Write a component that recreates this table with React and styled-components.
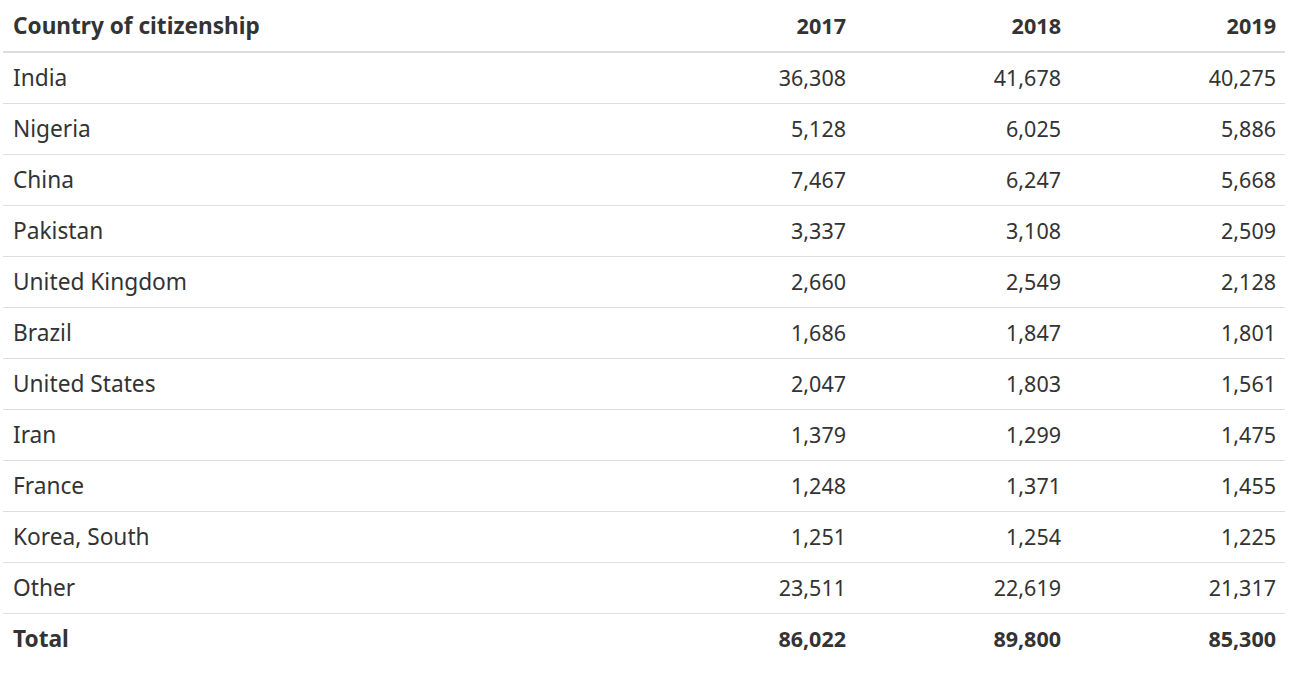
import React from "react";
import styled, { createGlobalStyle } from "styled-components";

const Global = createGlobalStyle`
  html, body { margin: 0; padding: 0; background: #fff; }
  body { font-family: "Noto Sans", "Open Sans", sans-serif; color: #333; }
`;

const Wrap = styled.div`
  padding: 0 31px 0 3px;
`;

const Table = styled.table`
  width: 1282px;
  border-collapse: collapse;
  line-height: 1.2;
  table-layout: fixed;
`;

const Th = styled.th`
  font-weight: 700;
  font-size: ${(p) => (p.$num ? "21.6px" : "22.6px")};
  text-align: ${(p) => (p.$num ? "right" : "left")};
  padding: 0 9px 0 10px;
  height: 51px;
  border-bottom: 2px solid #ddd;
  color: #333;
`;

const Td = styled.td`
  font-weight: ${(p) => (p.$bold ? 700 : 400)};
  font-size: ${(p) => (p.$num ? "21.5px" : "22.7px")};
  text-align: ${(p) => (p.$num ? "right" : "left")};
  padding: 0 9px 0 10px;
  height: 50px;
  border-top: ${(p) => (p.$first ? "none" : "1px solid #ddd")};
  color: #333;
`;

const rows = [
  ["India", "36,308", "41,678", "40,275"],
  ["Nigeria", "5,128", "6,025", "5,886"],
  ["China", "7,467", "6,247", "5,668"],
  ["Pakistan", "3,337", "3,108", "2,509"],
  ["United Kingdom", "2,660", "2,549", "2,128"],
  ["Brazil", "1,686", "1,847", "1,801"],
  ["United States", "2,047", "1,803", "1,561"],
  ["Iran", "1,379", "1,299", "1,475"],
  ["France", "1,248", "1,371", "1,455"],
  ["Korea, South", "1,251", "1,254", "1,225"],
  ["Other", "23,511", "22,619", "21,317"],
];

export default function App() {
  return (
    <Wrap>
      <Global />
      <Table>
        <colgroup>
          <col style={{ width: 637 }} />
          <col style={{ width: 215 }} />
          <col style={{ width: 215 }} />
          <col style={{ width: 215 }} />
        </colgroup>
        <thead>
          <tr>
            <Th>Country of citizenship</Th>
            <Th $num>2017</Th>
            <Th $num>2018</Th>
            <Th $num>2019</Th>
          </tr>
        </thead>
        <tbody>
          {rows.map((r, i) => (
            <tr key={r[0]}>
              {r.map((c, j) => (
                <Td key={j} $num={j > 0} $first={i === 0}>
                  {c}
                </Td>
              ))}
            </tr>
          ))}
          <tr>
            <Td $bold>Total</Td>
            <Td $bold $num>86,022</Td>
            <Td $bold $num>89,800</Td>
            <Td $bold $num>85,300</Td>
          </tr>
        </tbody>
      </Table>
    </Wrap>
  );
}
